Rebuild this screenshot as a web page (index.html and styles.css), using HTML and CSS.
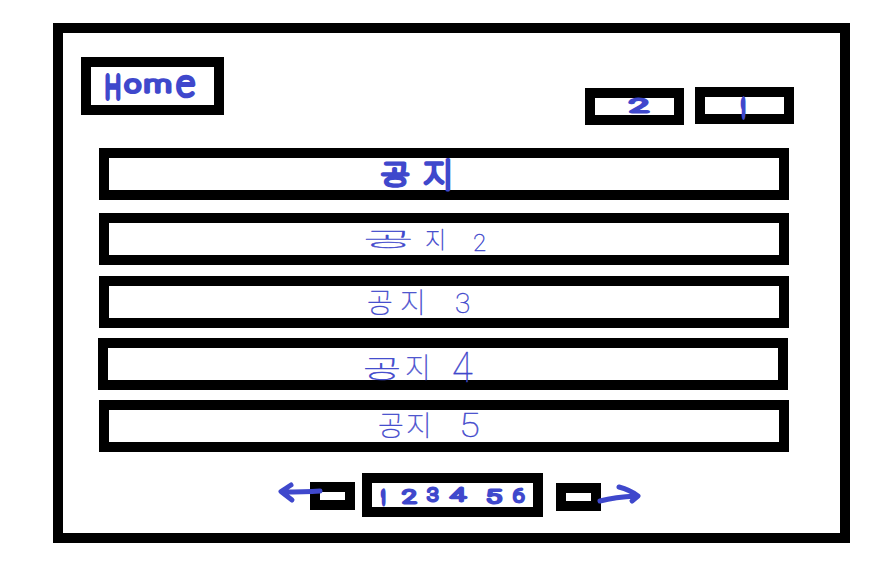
FILE: index.html
```html
<!DOCTYPE html>
<html lang="ko">
<head>
<meta charset="utf-8">
<title>공지</title>
<link rel="stylesheet" href="styles.css">
</head>
<body>
<main class="frame">
  <header class="header">
    <a class="box home"><svg class="ink marker" viewBox="91 67 123 38"><text class="cap" transform="translate(105 98) scale(.66 1)">H</text><text class="small" transform="translate(124.500 92) scale(1.25 1)">o</text><text class="em" transform="translate(143.500 92) scale(1.5 1)">m</text><text class="end" x="176" y="96">e</text></svg></a>
    <nav class="tabs">
      <a class="box tab tab-low"><svg class="ink marker" viewBox="595 98 79 17"><text class="digit" transform="translate(629 112) scale(1.9 1)">2</text></svg></a>
      <a class="box tab"><svg class="ink marker" viewBox="705 97 79 17"><text class="tall" transform="translate(742 113.500) scale(.3 1)">1</text></svg></a>
    </nav>
  </header>
  <section class="list">
    <article class="box row first"><svg class="ink marker" viewBox="109 158 670 32"><text class="title" transform="translate(381 184) scale(1.15 .95)">공</text><text class="title tail" x="423" y="187">지</text></svg></article>
    <article class="box row second"><svg class="ink pen" viewBox="109 223 670 32"><text transform="translate(363 247) scale(2.4 .9)">공</text><text x="425 460" y="248">지 </text><text class="two" x="473" y="251">2</text></svg></article>
    <article class="box row third"><svg class="ink pen" viewBox="109 286 670 32"><text class="large" x="367 400 440 455" y="313">공지 3</text></svg></article>
    <article class="box row fourth"><svg class="ink pen" viewBox="109 348 670 32"><text transform="translate(364 378) scale(1.8 1.1)">공</text><text class="large" x="406 440" y="378">지 </text><text class="four" transform="translate(453 382) scale(.9 1)">4</text></svg></article>
    <article class="box row fifth"><svg class="ink pen" viewBox="109 410 670 32"><text class="large" x="378 406 445" y="436">공지 </text><text class="five" transform="translate(459 437) scale(1.15 1)">5</text></svg></article>
  </section>
  <footer class="pager">
    <a class="box step prev" aria-label="이전"><svg class="ink marker arrow" viewBox="320 492 25 8"><path d="M320 491Q305 492 282 492M291 485L281 491.500L292 500"/></svg></a>
    <div class="box pages"><svg class="ink marker" viewBox="372 483 161 24"><text class="one" transform="translate(382 502) scale(.4 1)">1</text><text class="page" transform="translate(402 503) scale(1.4 1)">2</text><text class="page" transform="translate(427 501) scale(1.1 1)">3</text><text class="page" transform="translate(450 501) scale(1.5 1)">4</text><text class="page" transform="translate(486 503) scale(1.5 1)">5</text><text class="page" transform="translate(513 502) scale(1.1 1)">6</text></svg></div>
    <a class="box step next" aria-label="다음"><svg class="ink marker arrow" viewBox="566 493 25 8"><path d="M600 501Q615 497 636 496M619 487Q630 490 638 496L632 501"/></svg></a>
  </footer>
</main>
</body>
</html>
```
FILE: styles.css
```css
* { box-sizing: border-box; }
body { margin: 0; padding: 23px 26px 21px 53px; background: #fff; }
.frame {
  width: 797px;
  height: 520px;
  border: 10px solid #000;
  padding: 24px 46px 0 18px;
}
.box { display: block; border: 10px solid #000; background: #fff; }
.header { display: flex; justify-content: space-between; height: 91px; }
.home { width: 143px; height: 58px; }
.tabs { display: flex; gap: 11px; padding-top: 30px; }
.tab { width: 99px; height: 37px; }
.tab-low { margin-top: 1px; }
.list { padding-left: 18px; }
.row { width: 690px; height: 52px; }
.second { margin-top: 13px; }
.third { margin-top: 11px; }
.fourth { margin: 10px 0 0 -1px; }
.fifth { margin-top: 10px; }
.pager { display: flex; align-items: flex-start; padding: 21px 0 0 229px; }
.step { width: 45px; height: 28px; }
.prev { margin-top: 9px; }
.pages { width: 181px; height: 44px; margin: 0 13px 0 7px; }
.next { margin-top: 10px; }

/* Handwriting layer: strokes may run over the box borders. */
.ink {
  display: block;
  width: 100%;
  height: 100%;
  overflow: visible;
  position: relative;
  z-index: 1;
  fill: #3f48cc;
  stroke: #3f48cc;
  stroke-linecap: round;
  stroke-linejoin: round;
  font-family: Roboto, "Noto Sans CJK KR", sans-serif;
  font-weight: 100;
  white-space: pre;
}
.marker { stroke-width: 4px; }
.pen { stroke-width: 0.4px; font-size: 23px; }
.home .ink { font-family: Lato, sans-serif; }
.cap { font-size: 32px; stroke-width: 6px; }
.small { font-size: 24px; }
.em { font-size: 24px; stroke-width: 3.500px; }
.end { font-size: 37px; stroke-width: 4.500px; }
.digit { font-size: 19px; stroke-width: 3px; }
.tall { font-size: 17px; stroke-width: 12px; }
.title { font-size: 27px; stroke-width: 3.500px; }
.tail { font-size: 33px; }
.large { font-size: 28px; }
.two { font-size: 24px; }
.four { font-size: 42px; }
.five { font-size: 33px; }
.one { font-size: 13px; stroke-width: 9px; }
.page { font-size: 19px; stroke-width: 3px; }
.arrow { stroke-width: 5px; }
.arrow path { fill: none; }
```
